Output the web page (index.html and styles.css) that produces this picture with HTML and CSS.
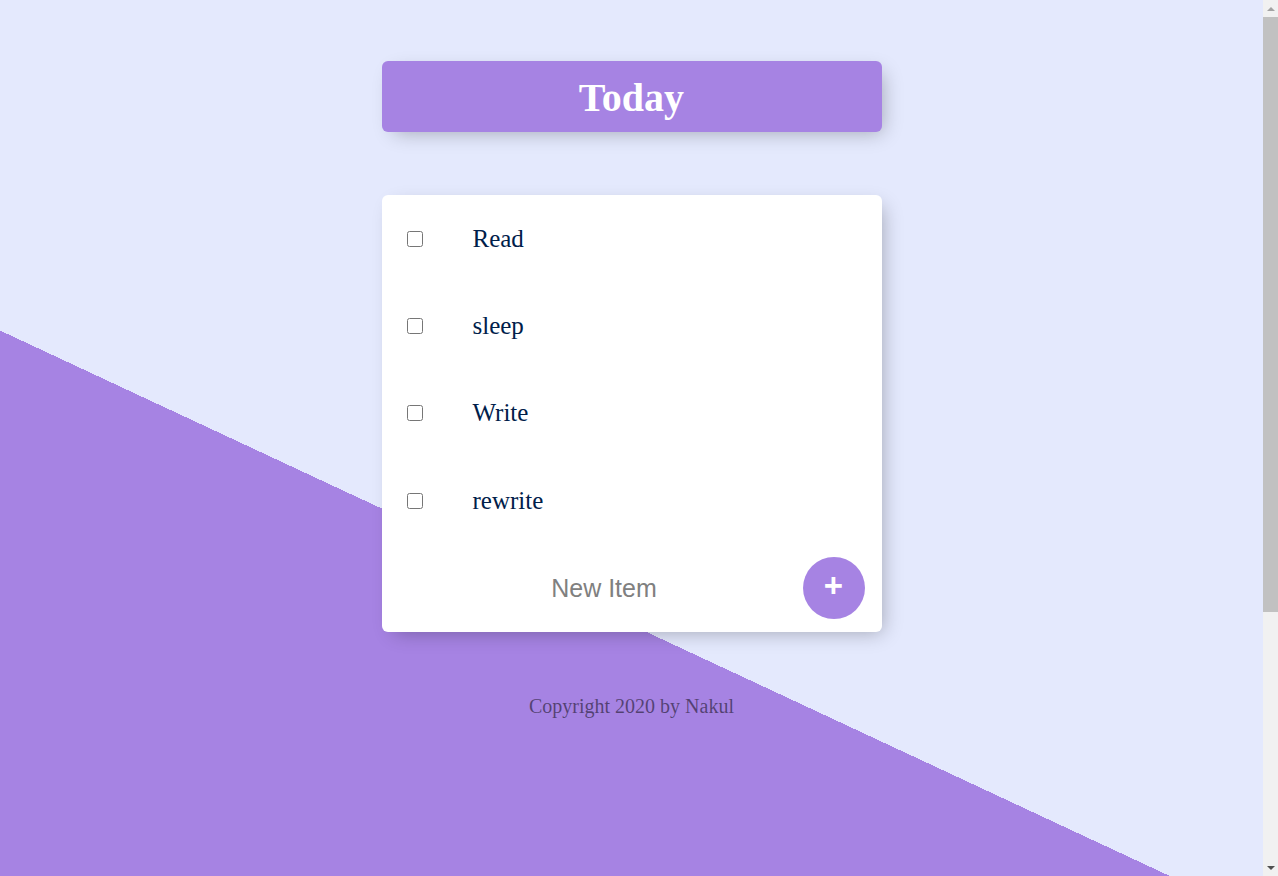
FILE: index.html
```html
<!DOCTYPE html>
<html lang="en">
<head>
<meta charset="utf-8">
<title>To Do List</title>
<link rel="stylesheet" href="styles.css">
</head>
<body>
  <main class="page">
    <div class="box heading">
      <h1 class="title">Today</h1>
    </div>
    <div class="box list">
      <div class="item">
        <input class="check" type="checkbox">
        <p class="label">Read</p>
      </div>
      <div class="item">
        <input class="check" type="checkbox">
        <p class="label">sleep</p>
      </div>
      <div class="item">
        <input class="check" type="checkbox">
        <p class="label">Write</p>
      </div>
      <div class="item">
        <input class="check" type="checkbox">
        <p class="label">rewrite</p>
      </div>
      <form class="item add-form" onsubmit="return false">
        <input class="new-item" type="text" name="newItem" placeholder="New Item" autocomplete="off">
        <button class="add-btn" type="submit">+</button>
      </form>
    </div>
    <footer class="footer">Copyright 2020 by Nakul</footer>
  </main>
  <div class="scrollbar" aria-hidden="true">
    <div class="sb-arrow sb-up"></div>
    <div class="sb-thumb"></div>
    <div class="sb-rest"></div>
    <div class="sb-arrow sb-down"></div>
  </div>
</body>
</html>
```
FILE: styles.css
```css
html {
  min-height: 1250px;
  margin-right: 15px;
  background-color: #E4E9FD;
  background-image: linear-gradient(25deg, #A683E3 50%, #E4E9FD 50%);
}

body {
  margin: 0;
  font-family: "Liberation Serif", "Times New Roman", serif;
}

.page {
  display: flex;
  flex-direction: column;
  align-items: center;
  padding-top: 61px;
}

.box {
  width: 500px;
  border-radius: 6px;
  box-shadow: 6px 6px 19px -6px rgba(0, 0, 0, 0.3);
}

.heading {
  height: 71px;
  background-color: #A683E3;
  display: flex;
  align-items: center;
  justify-content: center;
}

.title {
  margin: 0;
  color: #fff;
  font-size: 40px;
  font-weight: bold;
  line-height: 46px;
  padding-top: 2px;
}

.list {
  margin-top: 63px;
  background: #fff;
}

.item {
  box-sizing: border-box;
  height: 87.4px;
  display: flex;
  align-items: center;
}

.check {
  width: 16px;
  height: 16px;
  margin: 0 25px;
}

.label {
  margin: 0;
  padding: 0 25px;
  font-size: 25px;
  color: #00204a;
}

.add-form {
  margin: 0;
  padding-left: 25px;
  gap: 5px;
}

.new-item {
  width: 387px;
  height: 75px;
  padding: 0 0 0 4px;
  border: none;
  background: transparent;
  text-align: center;
  font-family: "Liberation Sans", Arial, sans-serif;
  font-size: 25px;
  color: #000;
}

.new-item::placeholder {
  color: grey;
  opacity: 1;
}

.new-item:focus {
  outline: none;
}

.add-btn {
  width: 62px;
  height: 62px;
  border-radius: 50%;
  border: 0;
  padding: 0 0 5px 0;
  background-color: #A683E3;
  color: #fff;
  font-family: "Liberation Sans", Arial, sans-serif;
  font-size: 33px;
  font-weight: bold;
  line-height: 1;
  display: flex;
  align-items: center;
  justify-content: center;
}

.footer {
  margin-top: 63px;
  font-size: 20px;
  color: rgba(0, 0, 0, 0.5);
  text-align: center;
}

/* browser scrollbar shown in the reference */
.scrollbar {
  position: fixed;
  top: 0;
  right: 0;
  width: 15px;
  height: 100vh;
  background: #F1F1F1;
  display: flex;
  flex-direction: column;
  align-items: stretch;
}

.sb-arrow {
  height: 17px;
  flex: none;
  display: flex;
  align-items: center;
  justify-content: center;
}

.sb-arrow::before {
  content: "";
  width: 0;
  height: 0;
  border-left: 4px solid transparent;
  border-right: 4px solid transparent;
}

.sb-up::before {
  border-bottom: 4px solid #A3A3A3;
}

.sb-down::before {
  border-top: 4px solid #505050;
}

.sb-thumb {
  height: 595px;
  flex: none;
  background: #C1C1C1;
}

.sb-rest {
  flex: 1;
}
```
